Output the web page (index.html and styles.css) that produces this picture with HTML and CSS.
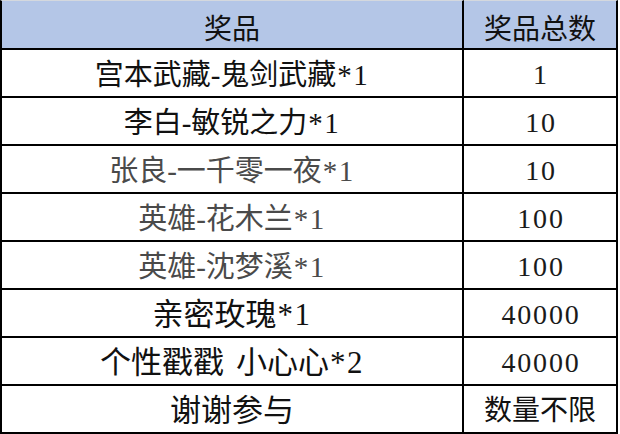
FILE: index.html
```html
<!DOCTYPE html>
<html lang="zh-CN">
<head>
<meta charset="utf-8">
<title>奖品</title>
<link rel="stylesheet" href="styles.css">
</head>
<body>
<table class="prizes">
  <colgroup>
    <col class="col-name">
    <col class="col-count">
  </colgroup>
  <thead>
    <tr class="head-row">
      <th class="cell first">奖品</th>
      <th class="cell">奖品总数</th>
    </tr>
  </thead>
  <tbody>
    <tr class="row">
      <td class="cell first name">宫本武藏-鬼剑武藏<span class="lat">*1</span></td>
      <td class="cell num">1</td>
    </tr>
    <tr class="row">
      <td class="cell first name">李白-敏锐之力<span class="lat">*1</span></td>
      <td class="cell num">10</td>
    </tr>
    <tr class="row">
      <td class="cell first name dim">张良-一千零一夜<span class="lat">*1</span></td>
      <td class="cell num">10</td>
    </tr>
    <tr class="row">
      <td class="cell first name dim">英雄-花木兰<span class="lat">*1</span></td>
      <td class="cell num">100</td>
    </tr>
    <tr class="row">
      <td class="cell first name dim">英雄-沈梦溪<span class="lat">*1</span></td>
      <td class="cell num">100</td>
    </tr>
    <tr class="row">
      <td class="cell first big">亲密玫瑰<span class="lat">*1</span></td>
      <td class="cell num">40000</td>
    </tr>
    <tr class="row">
      <td class="cell first big">个性戳戳<span class="gap"> </span>小心心<span class="lat">*2</span></td>
      <td class="cell num">40000</td>
    </tr>
    <tr class="row">
      <td class="cell first big">谢谢参与</td>
      <td class="cell">数量不限</td>
    </tr>
  </tbody>
</table>
</body>
</html>
```

FILE: styles.css
```css
html, body {
  margin: 0;
  padding: 0;
  background: #ffffff;
}

.prizes {
  width: 618px;
  border-collapse: separate;
  border-spacing: 0;
  table-layout: fixed;
  font-family: "Liberation Serif", "Noto Sans CJK SC", serif;
  font-size: 28px;
  color: #111111;
}

.col-name {
  width: 464px;
}

.col-count {
  width: 154px;
}

.cell {
  padding: 3px 0 0 0;
  text-align: center;
  vertical-align: middle;
  line-height: 30px;
  font-weight: normal;
  border-right: 2px solid #000000;
  border-bottom: 2px solid #000000;
  white-space: nowrap;
}

.cell.first {
  border-left: 2px solid #000000;
}

.head-row {
  height: 50px;
}

.head-row .cell {
  background: #b4c6e7;
  border-top: 1px solid #d4d8de;
  padding-top: 5px;
  font-family: "Noto Sans CJK SC", sans-serif;
}

.row {
  height: 48px;
}

.name {
  font-size: 29px;
}

.dim {
  color: #4a4a4a;
}

.big {
  font-size: 31px;
  padding-top: 4px;
}

.gap {
  display: inline-block;
  width: 12px;
}

.lat {
  letter-spacing: 1.5px;
  margin-left: 1px;
}

.num {
  color: #1a1a1a;
  letter-spacing: 1.8px;
  text-indent: 2px;
}
```
